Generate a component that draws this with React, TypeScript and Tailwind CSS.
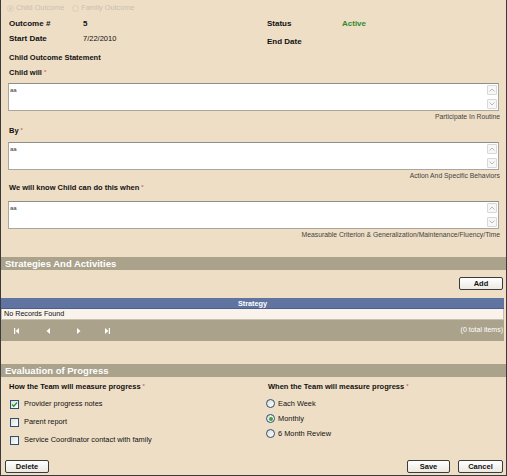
import React from "react";

const Req = () => <sup className="text-[#d06a6a] text-[6px] ml-[2px] relative top-[-1px]">*</sup>;

function TextBox({ value }: { value: string }) {
  return (
    <div className="mx-[7px] h-[28px] flex bg-white border border-[#a7a6a1] border-t-[#8f8e89]">
      <div className="flex-1 text-[6px] leading-[8px] pl-[1px] pt-[2px] text-[#333]">{value}</div>
      <div className="w-[11px] flex flex-col justify-between py-[1px] pr-[1px]">
        <div className="h-[10px] border border-[#d8d8d8] bg-[#f7f7f7] rounded-[1px] flex items-center justify-center">
          <svg width="6" height="4" viewBox="0 0 6 4"><path d="M0.5 3.5 L3 1 L5.5 3.5" fill="none" stroke="#b8b8b8" strokeWidth="1" /></svg>
        </div>
        <div className="h-[10px] border border-[#d8d8d8] bg-[#f7f7f7] rounded-[1px] flex items-center justify-center">
          <svg width="6" height="4" viewBox="0 0 6 4"><path d="M0.5 0.5 L3 3 L5.5 0.5" fill="none" stroke="#b8b8b8" strokeWidth="1" /></svg>
        </div>
      </div>
    </div>
  );
}

function Hint({ children }: { children: React.ReactNode }) {
  return <div className="h-[11px] pr-[6px] text-right text-[6.8px] leading-[11px] text-[#444]">{children}</div>;
}

function Btn({ children, w }: { children: React.ReactNode; w: string }) {
  return (
    <div className={`${w} h-[13px] border border-[#3b3b3b] rounded-[2px] bg-gradient-to-b from-white to-[#ece9e2] flex items-center justify-center text-[7.5px] font-bold text-[#111]`}>
      {children}
    </div>
  );
}

function SectionHeader({ children }: { children: React.ReactNode }) {
  return (
    <div className="h-[13px] bg-[#aaa28b] text-white font-bold text-[9.5px] leading-[13px] pl-[4px]">{children}</div>
  );
}

function CheckBox({ checked }: { checked?: boolean }) {
  return (
    <div className="w-[9px] h-[9px] border border-[#2a4f7a] bg-gradient-to-br from-[#e0e0d8] to-white flex items-center justify-center">
      {checked && (
        <svg width="7" height="7" viewBox="0 0 7 7"><path d="M1 3.5 L2.8 5.3 L6 1.5" fill="none" stroke="#2b9a2b" strokeWidth="1.4" /></svg>
      )}
    </div>
  );
}

function Radio({ checked }: { checked?: boolean }) {
  return (
    <div className="w-[9px] h-[9px] rounded-full border border-[#2a4f7a] bg-gradient-to-br from-[#dcdcd4] to-white flex items-center justify-center">
      {checked && <div className="w-[4px] h-[4px] rounded-full bg-[#3fa23f]" />}
    </div>
  );
}

export default function App() {
  return (
    <div className="w-[507px] h-[476px] bg-[#eedec5] border-l border-r border-b border-[#3a3a3a] overflow-hidden font-['Liberation_Sans',Arial,sans-serif] text-[#111]">
      {/* top radio row */}
      <div className="h-[16px] flex items-center pl-[6px] text-[7.3px] text-[#cbbfae]">
        <div className="w-[7px] h-[7px] rounded-full border border-[#d9cdbb] flex items-center justify-center mr-[2px]">
          <div className="w-[3px] h-[3px] rounded-full bg-[#d9cdbb]" />
        </div>
        <span>Child Outcome</span>
        <div className="w-[7px] h-[7px] rounded-full border border-[#d9cdbb] ml-[8px] mr-[2px]" />
        <span>Family Outcome</span>
      </div>

      {/* Outcome / Status */}
      <div className="h-[15px] flex items-center text-[8px]">
        <div className="w-[82px] pl-[8px] font-bold">Outcome #</div>
        <div className="w-[184px] font-bold">5</div>
        <div className="w-[75px] font-bold">Status</div>
        <div className="font-bold text-[#2f8a2f]">Active</div>
      </div>
      <div className="h-[16px] flex items-center text-[8px]">
        <div className="w-[82px] pl-[8px] font-bold">Start Date</div>
        <div className="w-[184px] text-[7.5px]">7/22/2010</div>
        <div className="w-[75px] font-bold relative top-[3px]">End Date</div>
      </div>

      <div className="h-[4px]" />
      <div className="h-[14px] flex items-center pl-[8px] text-[7.5px] font-bold">Child Outcome Statement</div>
      <div className="h-[15px] flex items-center pl-[8px] text-[7.5px] font-bold">
        Child will<Req />
      </div>
      <div className="h-[3px]" />
      <TextBox value="aa" />
      <Hint>Participate In Routine</Hint>

      <div className="h-[2px]" />
      <div className="h-[14px] flex items-center pl-[8px] text-[7.5px] font-bold">
        By<Req />
      </div>
      <div className="h-[4px]" />
      <TextBox value="aa" />
      <Hint>Action And Specific Behaviors</Hint>

      <div className="h-[14px] flex items-center pl-[8px] text-[7.5px] font-bold">
        We will know Child can do this when<Req />
      </div>
      <div className="h-[6px]" />
      <TextBox value="aa" />
      <Hint>Measurable Criterion &amp; Generalization/Maintenance/Fluency/Time</Hint>

      <div className="h-[17px]" />
      <SectionHeader>Strategies And Activities</SectionHeader>
      <div className="h-[7px]" />
      <div className="flex justify-end pr-[3px]">
        <Btn w="w-[44px]">Add</Btn>
      </div>
      <div className="h-[8px]" />
      <div className="mr-[2px]">
        <div className="h-[11px] bg-[#6074a2] text-white text-[7.3px] font-bold leading-[11px] text-center border-b border-[#4d5f88]">Strategy</div>
        <div className="h-[11px] bg-[#f9f3ec] text-[7.2px] leading-[10px] pl-[2px] border border-[#c9bfae] border-t-0 text-[#111]">No Records Found</div>
        <div className="h-[21px] bg-[#aaa28b] flex items-center text-[7px] text-white">
          <div className="w-[13px]" />
          <svg width="5" height="6" viewBox="0 0 5 6"><rect x="0" y="0" width="1.2" height="6" fill="#fff" /><path d="M5 0 L1.6 3 L5 6 Z" fill="#fff" /></svg>
          <div className="w-[27px]" />
          <svg width="4" height="6" viewBox="0 0 4 6"><path d="M4 0 L0.5 3 L4 6 Z" fill="#fff" /></svg>
          <div className="w-[27px]" />
          <svg width="4" height="6" viewBox="0 0 4 6"><path d="M0 0 L3.5 3 L0 6 Z" fill="#fff" /></svg>
          <div className="w-[24px]" />
          <svg width="5" height="6" viewBox="0 0 5 6"><path d="M0 0 L3.4 3 L0 6 Z" fill="#fff" /><rect x="3.8" y="0" width="1.2" height="6" fill="#fff" /></svg>
          <div className="flex-1 text-right pr-[1px]">(0 total items)</div>
        </div>
      </div>

      <div className="h-[23px]" />
      <SectionHeader>Evaluation of Progress</SectionHeader>

      <div className="flex pt-[4px]">
        <div className="w-[258px] pl-[8px]">
          <div className="h-[12px] flex items-center text-[7.5px] font-bold">
            How the Team will measure progress<Req />
          </div>
          <div className="h-[2px]" />
          {[
            ["Provider progress notes", true],
            ["Parent report", false],
            ["Service Coordinator contact with family", false],
          ].map(([label, c]) => (
            <div key={label as string} className="h-[18px] flex items-center pl-[1px] text-[7.4px]">
              <CheckBox checked={c as boolean} />
              <span className="ml-[5px]">{label as string}</span>
            </div>
          ))}
        </div>
        <div className="flex-1 pl-[9px]">
          <div className="h-[12px] flex items-center text-[7.5px] font-bold">
            When the Team will measure progress<Req />
          </div>
          <div className="h-[3px]" />
          {[
            ["Each Week", false],
            ["Monthly", true],
            ["6 Month Review", false],
          ].map(([label, c]) => (
            <div key={label as string} className="h-[15px] flex items-center text-[7.4px] -ml-[2px]">
              <Radio checked={c as boolean} />
              <span className="ml-[3px]">{label as string}</span>
            </div>
          ))}
        </div>
      </div>

      <div className="h-[11px]" />
      <div className="flex items-center pl-[4px] pr-[3px]">
        <Btn w="w-[44px]">Delete</Btn>
        <div className="flex-1" />
        <Btn w="w-[43px]">Save</Btn>
        <div className="w-[8px]" />
        <Btn w="w-[45px]">Cancel</Btn>
      </div>
    </div>
  );
}
